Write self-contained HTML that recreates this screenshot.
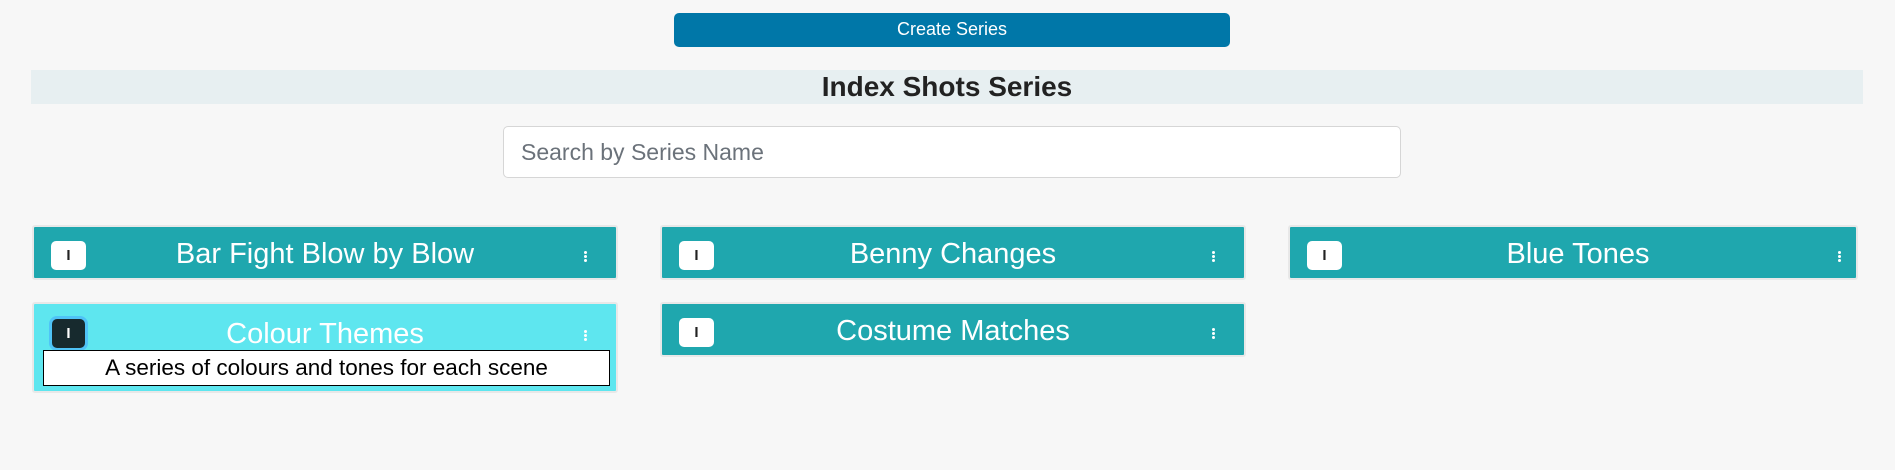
<!DOCTYPE html>
<html><head><style>
body{margin:0;width:1895px;height:470px;background:#f7f7f7;font-family:"Liberation Sans",sans-serif;position:relative;overflow:hidden}
.abs{position:absolute}
.btn{left:674px;top:13px;width:556px;height:34px;background:#0077a8;border-radius:5px;color:#fff;font-size:18px;text-align:center;line-height:33px}
.band{left:31px;top:70px;width:1832px;height:34px;background:#e7eff1;text-align:center;font-weight:bold;font-size:28px;line-height:34px;color:#222}
.search{left:503px;top:126px;width:898px;height:52px;background:#fff;border:1px solid #d6d6d6;border-radius:5px;box-sizing:border-box;font-size:23px;color:#6b727a;line-height:50px;padding-left:17px}
.card{background:#1fa7ae;border:2px solid #e8e8e8;box-sizing:border-box;border-radius:3px;color:#fff;font-size:29px;width:586px}
.card .t{position:absolute;left:0;right:0;top:0;height:55px;line-height:55px;text-align:center}
.badge{position:absolute;left:17px;top:14px;width:35px;height:29px;background:#fff;border-radius:5px;color:#222;font-size:15px;text-align:center;line-height:29px;font-weight:bold}
.keb{position:absolute;right:29px;top:24px;width:3px}
.keb i{display:block;width:3px;height:3px;background:#fff;border-radius:2px;margin-bottom:1px}
</style></head><body>
<div class="abs btn">Create Series</div>
<div class="abs band">Index Shots Series</div>
<div class="abs search">Search by Series Name</div>

<div class="abs card" style="left:32px;top:225px;height:55px"><div class="t">Bar Fight Blow by Blow</div><div class="badge">I</div><div class="keb"><i></i><i></i><i></i></div></div>
<div class="abs card" style="left:660px;top:225px;height:55px"><div class="t">Benny Changes</div><div class="badge">I</div><div class="keb"><i></i><i></i><i></i></div></div>
<div class="abs card" style="left:1288px;top:225px;height:55px;width:570px"><div class="t" style="left:10px">Blue Tones</div><div class="badge">I</div><div class="keb" style="right:15px"><i></i><i></i><i></i></div></div>
<div class="abs card" style="left:660px;top:302px;height:55px"><div class="t">Costume Matches</div><div class="badge">I</div><div class="keb"><i></i><i></i><i></i></div></div>

<div class="abs card" style="left:32px;top:302px;height:91px;background:#5ee6ef"><div class="t" style="height:40px;line-height:40px;top:10px">Colour Themes</div>
<div class="badge" style="background:#172a2e;color:#fff;box-shadow:0 0 0 3px #4fc3f7;left:18px;top:15px;width:33px">I</div>
<div class="keb" style="top:26px"><i></i><i></i><i></i></div>
<div style="position:absolute;left:9px;top:46px;width:567px;height:36px;box-sizing:border-box;border:1px solid #000;background:#fff;color:#000;font-size:22.5px;text-align:center;line-height:34px">A series of colours and tones for each scene</div></div>
</body></html>
